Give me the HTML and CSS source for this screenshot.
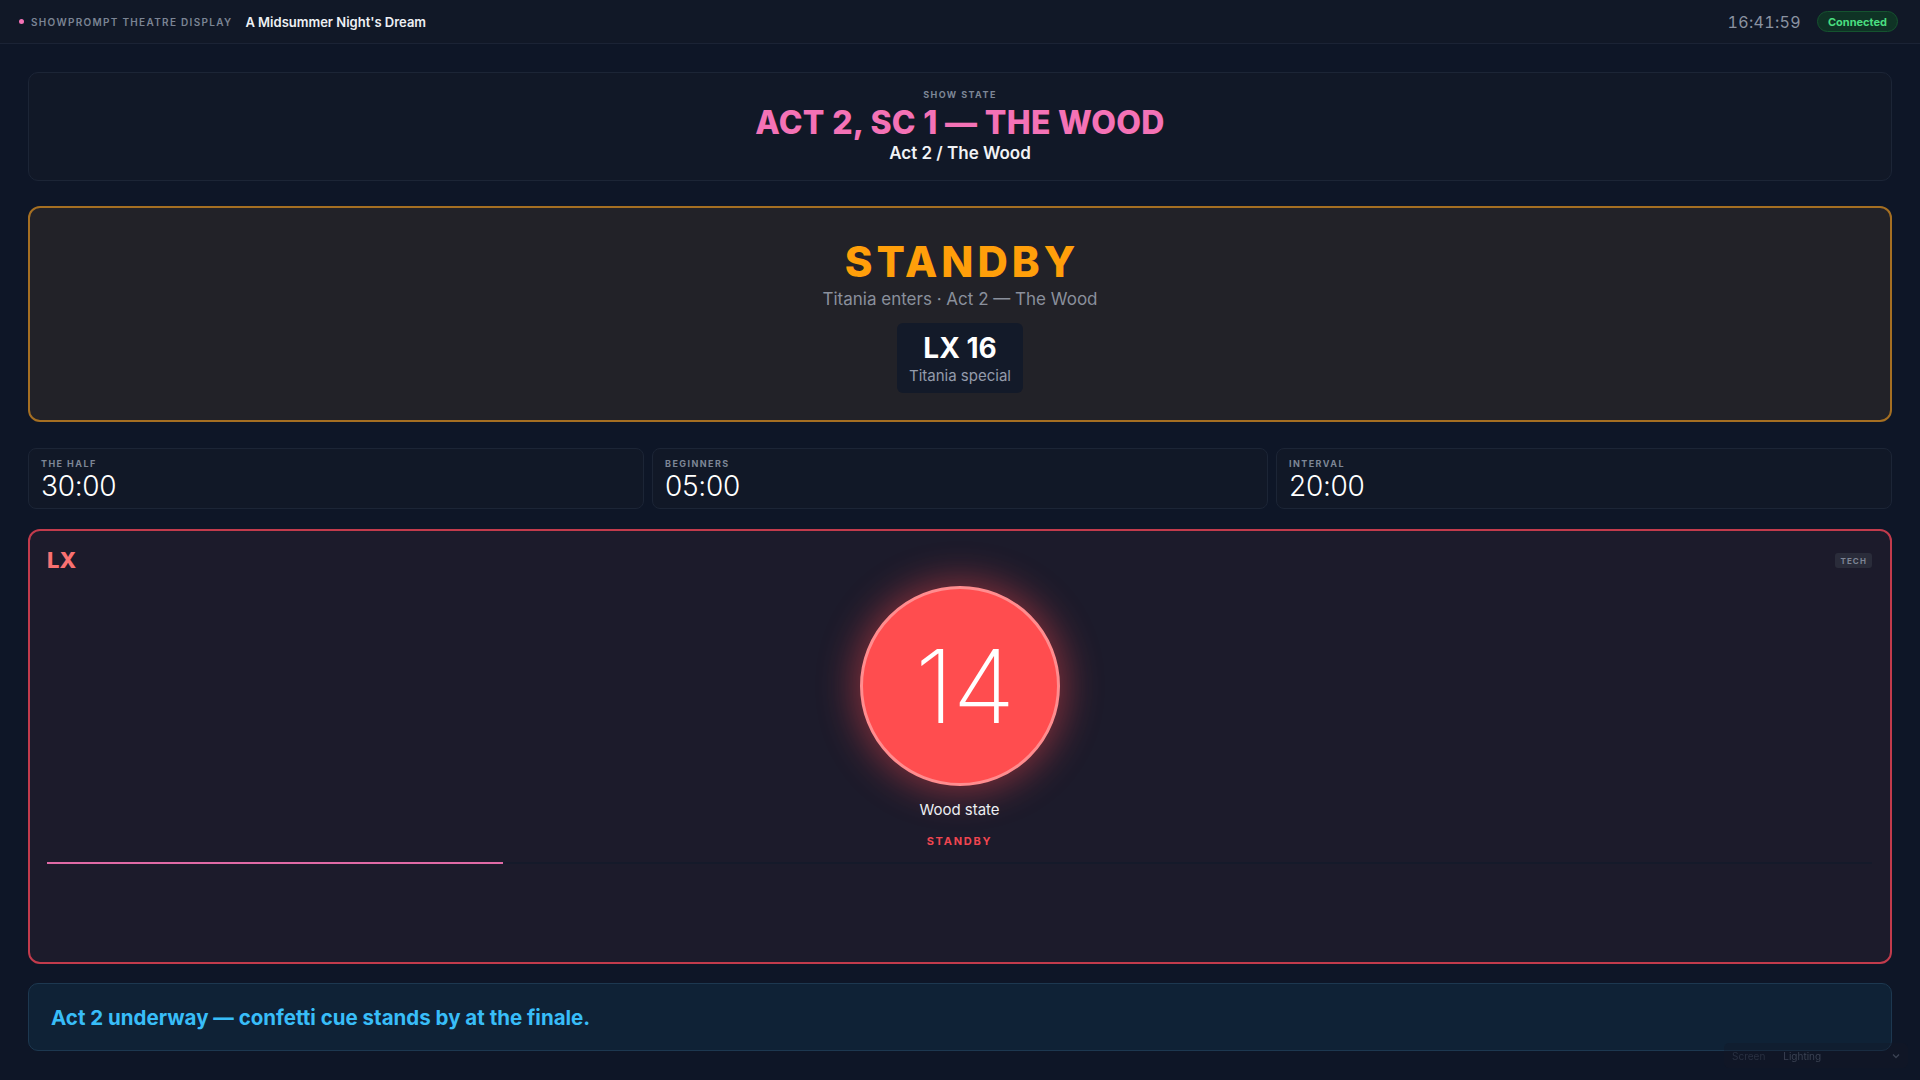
FILE: index.html
```html
<!DOCTYPE html>
<html lang="en">
<head>
<meta charset="utf-8">
<title>ShowPrompt Theatre Display</title>
<link rel="stylesheet" href="styles.css">
</head>
<body>
<header class="topbar">
  <div class="brand">
    <span class="dot"></span>
    <span class="brand-label">SHOWPROMPT THEATRE DISPLAY</span>
    <span class="show-title">A Midsummer Night's Dream</span>
  </div>
  <div class="status">
    <span class="clock">16:41:59</span>
    <span class="pill">Connected</span>
  </div>
</header>
<main class="main">
  <section class="card state-card">
    <div class="tiny-label">SHOW STATE</div>
    <div class="state-title">ACT 2, SC 1 — THE WOOD</div>
    <div class="state-sub">Act 2 / The Wood</div>
  </section>

  <section class="standby-card">
    <div class="standby-word">STANDBY</div>
    <div class="standby-sub">Titania enters · Act 2 — The Wood</div>
    <div class="cue-box">
      <div class="cue-num">LX 16</div>
      <div class="cue-name">Titania special</div>
    </div>
  </section>

  <section class="timers">
    <div class="card timer">
      <div class="tiny-label">THE HALF</div>
      <div class="timer-val">30:00</div>
    </div>
    <div class="card timer">
      <div class="tiny-label">BEGINNERS</div>
      <div class="timer-val">05:00</div>
    </div>
    <div class="card timer">
      <div class="tiny-label">INTERVAL</div>
      <div class="timer-val">20:00</div>
    </div>
  </section>

  <section class="dept-card">
    <div class="dept-head">
      <span class="dept-name">LX</span>
      <span class="badge">TECH</span>
    </div>
    <div class="dept-body">
      <div class="cue-circle">14</div>
      <div class="cue-desc">Wood state</div>
      <div class="cue-state">STANDBY</div>
    </div>
    <div class="track"><div class="fill" style="width:25%"></div></div>
  </section>

  <section class="message">Act 2 underway — confetti cue stands by at the finale.</section>
</main>
<div class="screen-select">
  <span class="sel-label">Screen</span>
  <span class="sel-value">Lighting</span>
  <svg class="chev" width="8" height="6" viewBox="0 0 8 6"><path d="M1 1.5 L4 4.5 L7 1.5" fill="none" stroke="currentColor" stroke-width="1.3"/></svg>
</div>
</body>
</html>
```

FILE: styles.css
```css
* { box-sizing: border-box; }
html, body { margin: 0; padding: 0; }
body {
  background: #0e1627;
  color: #e5e7eb;
  font-family: Inter, "Noto Sans", "Liberation Sans", sans-serif;
  height: 100vh;
  overflow: hidden;
  display: flex;
  flex-direction: column;
}
.topbar {
  height: 44px;
  flex: none;
  background: #111827;
  border-bottom: 1px solid #1b2335;
  display: flex;
  align-items: center;
  justify-content: space-between;
  padding: 0 22px 0 19px;
}
.brand { display: flex; align-items: center; }
.dot {
  width: 5px; height: 5px; border-radius: 50%;
  background: #f472b6;
  margin-right: 7px;
}
.brand-label {
  font-size: 10px; font-weight: 600; letter-spacing: 0.13em;
  color: #7b8494;
}
.show-title {
  margin-left: 13px;
  font-size: 13px; font-weight: 600; color: #eef0f4;
}
.status { display: flex; align-items: center; gap: 16px; }
.clock {
  font-size: 16px; color: #8a92a1; letter-spacing: 0.02em;
  font-variant-numeric: tabular-nums;
}
.pill {
  height: 21px; padding: 0 10px;
  border-radius: 11px;
  background: #0f3325;
  border: 1px solid #15532f;
  color: #4ade80;
  font-size: 11px; font-weight: 700;
  display: flex; align-items: center;
}
.main {
  flex: 1;
  min-height: 0;
  display: flex;
  flex-direction: column;
  padding: 28px 28px 29px;
}
.card {
  background: #111827;
  border: 1px solid #1c2536;
  border-radius: 10px;
}
.tiny-label {
  font-size: 9px; font-weight: 700; letter-spacing: 0.16em;
  color: #7d8696; line-height: 12px;
}
.state-card {
  text-align: center;
  padding: 16px 20px 16px;
  margin-bottom: 25px;
}
.state-title {
  margin-top: 4px;
  font-size: 32px; font-weight: 800; line-height: 36px;
  color: #f472b6; letter-spacing: 0.01em;
}
.state-sub {
  margin-top: 1px;
  font-size: 17px; font-weight: 600; line-height: 22px; color: #f1f2f5;
}
.standby-card {
  background: #222228;
  border: 2px solid #a56f22;
  border-radius: 12px;
  padding: 28px 20px 27px;
  display: flex; flex-direction: column; align-items: center;
  margin-bottom: 26px;
}
.standby-word {
  font-size: 42px; font-weight: 800; line-height: 52px;
  letter-spacing: 0.095em; color: #ff9f0a;
  margin-right: -0.095em;
}
.standby-sub {
  font-size: 17px; line-height: 22px; color: #8a909c;
}
.cue-box {
  margin-top: 13px;
  background: #131a29;
  border-radius: 6px;
  padding: 9px 12px 8px;
  text-align: center;
}
.cue-num { font-size: 28px; font-weight: 700; line-height: 32px; color: #ffffff; }
.cue-name { margin-top: 3px; font-size: 15px; line-height: 18px; color: #939bab; }
.timers {
  display: grid;
  grid-template-columns: repeat(3, 1fr);
  gap: 8px;
  margin-bottom: 20px;
}
.timer {
  border-radius: 8px;
  padding: 9px 12px 7px;
}
.timer-val {
  margin-top: 1px;
  font-size: 28px; font-weight: 300; line-height: 30px; color: #ffffff;
  letter-spacing: -0.01em;
}
.dept-card {
  flex: 1;
  min-height: 0;
  background: #1c1b2b;
  border: 2px solid #c23b4c;
  border-radius: 12px;
  padding: 16px 18px 18px 17px;
  display: flex; flex-direction: column;
  margin-bottom: 19px;
}
.dept-head {
  display: flex; justify-content: space-between; align-items: center;
  height: 26px;
}
.dept-name { font-size: 22px; font-weight: 800; color: #f87171; }
.badge {
  font-size: 8px; font-weight: 700; letter-spacing: 0.14em;
  color: #7d8494; background: #2a2c3a;
  border-radius: 3px; padding: 3px 5px 2px;
}
.dept-body {
  display: flex; flex-direction: column; align-items: center;
  margin-top: 13px;
}
.cue-circle {
  width: 200px; height: 200px; border-radius: 50%;
  background: #ff4d4f;
  border: 3px solid #ff8d8f;
  box-shadow: 0 0 36px 6px rgba(255, 72, 76, 0.45);
  display: flex; align-items: center; justify-content: center;
  padding-left: 10px;
  font-size: 102px; font-weight: 200; color: #ffffff;
  letter-spacing: -0.01em;
}
.cue-desc { margin-top: 14px; font-size: 15px; line-height: 20px; color: #eceef2; }
.cue-state {
  margin-top: 13px;
  font-size: 11px; font-weight: 700; letter-spacing: 0.16em; line-height: 16px;
  color: #f04650;
}
.track {
  margin-top: 13px;
  height: 2px;
  background: #151a2a;
}
.fill { height: 100%; background: #e06aa6; }
.message {
  flex: none;
  height: 68px;
  background: #0f2236;
  border: 1px solid #1d3850;
  border-radius: 10px;
  padding: 0 22px;
  display: flex; align-items: center;
  font-size: 20.5px; font-weight: 700; color: #38bdf8;
}
.screen-select {
  position: fixed;
  right: 12px;
  bottom: 12px;
  height: 25px;
  width: 184px;
  display: flex; align-items: center;
  padding: 0 8px;
  font-size: 10px;
  background: rgba(20, 24, 38, 0.35);
  border-radius: 5px;
}
.sel-label { color: #2a3142; margin-right: 18px; }
.sel-value { color: #3b4253; flex: 1; }
.chev { color: #3b4253; }
```
